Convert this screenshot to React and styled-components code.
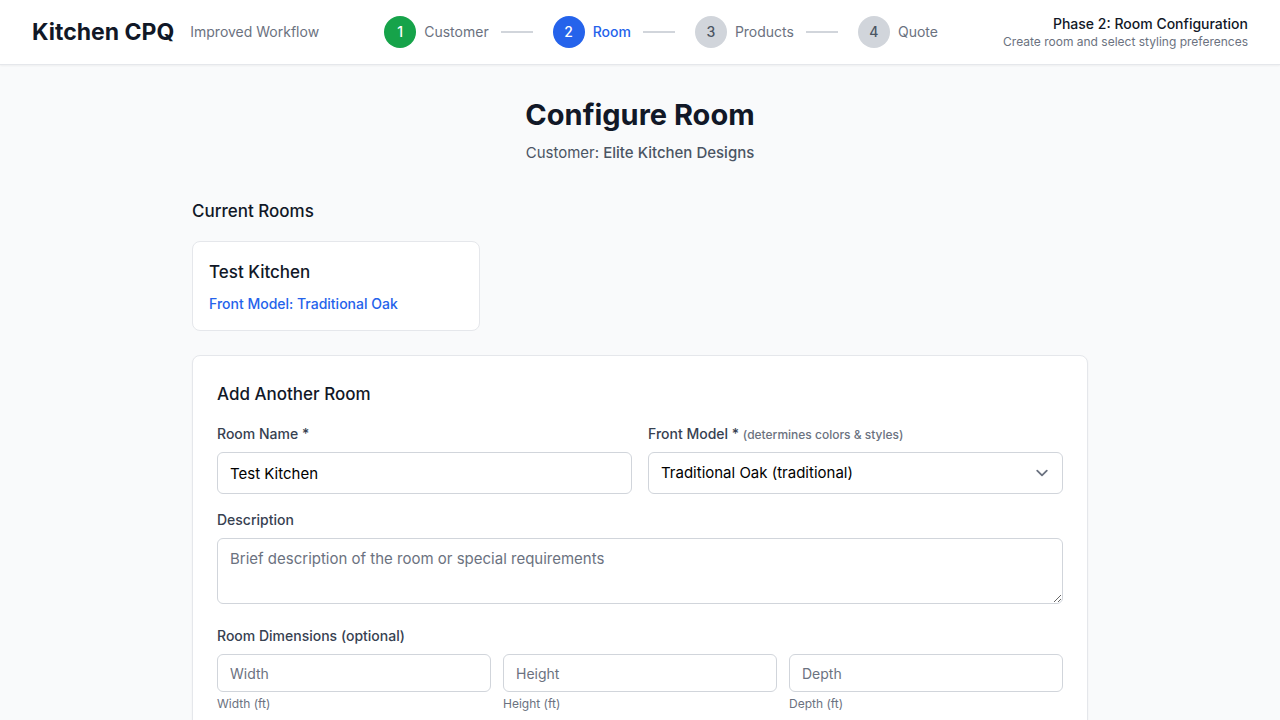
import React, { useState } from "react";
import styled, { createGlobalStyle, css } from "styled-components";

const GlobalStyle = createGlobalStyle`
  *, *::before, *::after { box-sizing: border-box; }
  body {
    margin: 0;
    background: #f9fafb;
    color: #111827;
    font-family: Inter, "Liberation Sans", sans-serif;
    font-size: 15px;
    line-height: 24px;
  }
  h1, h2, h3, p { margin: 0; }
  input, select, textarea { font-family: inherit; margin: 0; }
`;

const Header = styled.header`
  display: flex;
  align-items: center;
  justify-content: space-between;
  padding: 12px 32px;
  background: #fff;
  border-bottom: 1px solid #e5e7eb;
  box-shadow: 0 1px 2px rgba(0, 0, 0, 0.05);
`;

const Brand = styled.div`
  display: flex;
  align-items: center;
  gap: 16px;
`;

const Logo = styled.h1`
  font-size: 23px;
  line-height: 40px;
  font-weight: 700;
`;

const Tagline = styled.span`
  font-size: 14px;
  line-height: 20px;
  color: #6b7280;
`;

const Steps = styled.ol`
  display: flex;
  align-items: center;
  margin: 0;
  padding: 0;
  list-style: none;
`;

const Step = styled.li`
  display: flex;
  align-items: center;
`;

const tones = {
  done: css`background: #16a34a; color: #fff;`,
  active: css`background: #2563eb; color: #fff;`,
  pending: css`background: #d1d5db; color: #4b5563;`,
};

const StepNumber = styled.span`
  display: flex;
  align-items: center;
  justify-content: center;
  width: 32px;
  height: 32px;
  border-radius: 50%;
  font-size: 14px;
  line-height: 20px;
  font-weight: 500;
  ${({ $state }) => tones[$state]}
`;

const StepName = styled.span`
  margin-left: 8px;
  font-size: 14px;
  line-height: 20px;
  font-weight: ${({ $state }) => ($state === "active" ? 500 : 400)};
  color: ${({ $state }) => ($state === "active" ? "#2563eb" : "#6b7280")};
`;

const Connector = styled.span`
  width: 32px;
  height: 2px;
  margin: 0 20px 0 12px;
  background: #d1d5db;
`;

const Phase = styled.div`
  text-align: right;
`;

const PhaseTitle = styled.p`
  font-size: 14px;
  line-height: 20px;
  font-weight: 500;
`;

const PhaseNote = styled.p`
  font-size: 12px;
  line-height: 16px;
  color: #6b7280;
`;

const Main = styled.main`
  max-width: 944px;
  margin: 0 auto;
  padding: 32px 24px;
`;

const Intro = styled.div`
  margin-bottom: 32px;
  text-align: center;
`;

const PageTitle = styled.h2`
  margin-bottom: 8px;
  font-size: 29px;
  line-height: 36px;
  font-weight: 700;
`;

const CustomerLine = styled.p`
  color: #4b5563;
`;

const CustomerName = styled.span`
  font-weight: 500;
`;

const SectionTitle = styled.h3`
  margin-bottom: 16px;
  font-size: 17px;
  line-height: 28px;
  font-weight: 500;
`;

const RoomGrid = styled.div`
  display: grid;
  grid-template-columns: repeat(3, minmax(0, 1fr));
  gap: 16px;
  margin-bottom: 24px;
`;

const RoomCard = styled.article`
  padding: 16px;
  background: #fff;
  border: 1px solid #e5e7eb;
  border-radius: 8px;
`;

const RoomName = styled.h3`
  margin-bottom: 8px;
  font-size: 17px;
  line-height: 28px;
  font-weight: 500;
`;

const RoomModel = styled.p`
  font-size: 14px;
  line-height: 20px;
  font-weight: 500;
  color: #2563eb;
`;

const FormCard = styled.form`
  padding: 24px;
  background: #fff;
  border: 1px solid #e5e7eb;
  border-radius: 8px;
  box-shadow: 0 1px 2px rgba(0, 0, 0, 0.05);
`;

const FieldRow = styled.div`
  display: grid;
  grid-template-columns: repeat(2, minmax(0, 1fr));
  gap: 16px;
  margin-bottom: 16px;
`;

const Field = styled.div`
  display: flex;
  flex-direction: column;
`;

const DescriptionField = styled(Field)`
  margin-bottom: 22px;
`;

const labelText = css`
  display: block;
  margin-bottom: 8px;
  padding: 0;
  font-size: 14px;
  line-height: 20px;
  font-weight: 500;
  color: #374151;
`;

const Label = styled.label`
  ${labelText}
`;

const Hint = styled.span`
  font-size: 12px;
  line-height: 16px;
  color: #6b7280;
`;

const control = css`
  display: block;
  width: 100%;
  padding: 8px 12px;
  font-size: 15px;
  line-height: 24px;
  color: #000;
  background-color: #fff;
  border: 1px solid #d1d5db;
  border-radius: 6px;
  &::placeholder { color: #6b7280; opacity: 1; }
  &:focus { outline: 2px solid #2563eb; outline-offset: -1px; }
`;

const TextInput = styled.input`
  ${control}
  height: 42px;
`;

const SmallInput = styled.input`
  ${control}
  height: 38px;
  font-size: 14px;
  line-height: 20px;
`;

const TextArea = styled.textarea`
  ${control}
  height: 66px;
  resize: vertical;
`;

const SelectWrap = styled.div`
  display: grid;
  align-items: center;
  & > * { grid-area: 1 / 1; }
`;

const Select = styled.select`
  ${control}
  height: 42px;
  padding-right: 40px;
  appearance: none;
`;

const Chevron = styled.svg`
  justify-self: end;
  width: 24px;
  height: 24px;
  margin-right: 9px;
  pointer-events: none;
`;

const Dimensions = styled.fieldset`
  min-width: 0;
  margin: 0;
  padding: 0;
  border: 0;
`;

const Legend = styled.legend`
  ${labelText}
`;

const DimensionGrid = styled.div`
  display: grid;
  grid-template-columns: repeat(3, minmax(0, 1fr));
  gap: 12px;
`;

const Caption = styled.label`
  margin-top: 4px;
  font-size: 12px;
  line-height: 16px;
  color: #6b7280;
`;

const steps = [
  { name: "Customer", state: "done" },
  { name: "Room", state: "active" },
  { name: "Products", state: "pending" },
  { name: "Quote", state: "pending" },
];

const dimensions = ["Width", "Height", "Depth"];

export default function App() {
  const [roomName, setRoomName] = useState("Test Kitchen");

  return (
    <>
      <GlobalStyle />
      <Header>
        <Brand>
          <Logo>Kitchen CPQ</Logo>
          <Tagline>Improved Workflow</Tagline>
        </Brand>
        <Steps>
          {steps.map(({ name, state }, i) => (
            <Step key={name} aria-current={state === "active" ? "step" : undefined}>
              <StepNumber $state={state}>{i + 1}</StepNumber>
              <StepName $state={state}>{name}</StepName>
              {i < steps.length - 1 && <Connector />}
            </Step>
          ))}
        </Steps>
        <Phase>
          <PhaseTitle>Phase 2: Room Configuration</PhaseTitle>
          <PhaseNote>Create room and select styling preferences</PhaseNote>
        </Phase>
      </Header>
      <Main>
        <Intro>
          <PageTitle>Configure Room</PageTitle>
          <CustomerLine>
            Customer: <CustomerName>Elite Kitchen Designs</CustomerName>
          </CustomerLine>
        </Intro>
        <SectionTitle>Current Rooms</SectionTitle>
        <RoomGrid>
          <RoomCard>
            <RoomName>Test Kitchen</RoomName>
            <RoomModel>Front Model: Traditional Oak</RoomModel>
          </RoomCard>
        </RoomGrid>
        <FormCard>
          <SectionTitle>Add Another Room</SectionTitle>
          <FieldRow>
            <Field>
              <Label htmlFor="room-name">Room Name *</Label>
              <TextInput
                id="room-name"
                type="text"
                value={roomName}
                onChange={(e) => setRoomName(e.target.value)}
              />
            </Field>
            <Field>
              <Label htmlFor="front-model">
                Front Model * <Hint>(determines colors &amp; styles)</Hint>
              </Label>
              <SelectWrap>
                <Select id="front-model" defaultValue="oak">
                  <option value="oak">Traditional Oak (traditional)</option>
                </Select>
                <Chevron viewBox="0 0 20 20" fill="none" aria-hidden="true">
                  <path
                    d="M6 8l4 4 4-4"
                    stroke="#6b7280"
                    strokeWidth="1.5"
                    strokeLinecap="round"
                    strokeLinejoin="round"
                  />
                </Chevron>
              </SelectWrap>
            </Field>
          </FieldRow>
          <DescriptionField>
            <Label htmlFor="description">Description</Label>
            <TextArea
              id="description"
              rows={2}
              placeholder="Brief description of the room or special requirements"
            />
          </DescriptionField>
          <Dimensions>
            <Legend>Room Dimensions (optional)</Legend>
            <DimensionGrid>
              {dimensions.map((name) => (
                <Field key={name}>
                  <SmallInput id={name} type="number" placeholder={name} />
                  <Caption htmlFor={name}>{name} (ft)</Caption>
                </Field>
              ))}
            </DimensionGrid>
          </Dimensions>
        </FormCard>
      </Main>
    </>
  );
}
